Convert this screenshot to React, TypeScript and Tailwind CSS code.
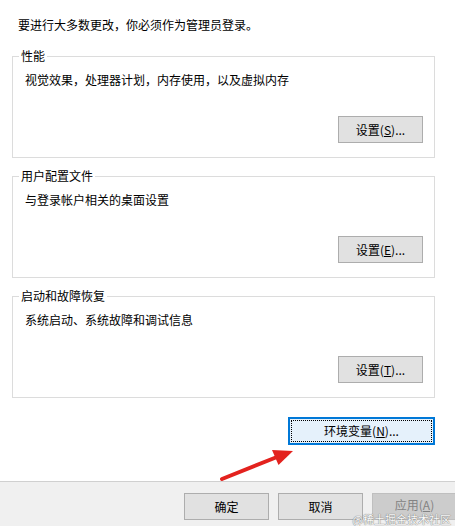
import React from "react";

const font = { fontFamily: '"Microsoft YaHei", "Noto Sans CJK SC", "Noto Sans", sans-serif' };

function WinButton({ children, className = "" }: { children: React.ReactNode; className?: string }) {
  return (
    <button className={`h-[27px] w-[85px] shrink-0 border border-[#adadad] bg-[#e1e1e1] text-[12px] leading-none text-black ${className}`}>
      {children}
    </button>
  );
}

function Group({ title, desc, label, hotkey }: { title: string; desc: string; label: string; hotkey: string }) {
  return (
    <fieldset className="border border-[#dcdcdc]">
      <legend className="ml-[6px] px-[2px] text-[12px] leading-[16px]">{title}</legend>
      <div className="pl-[12px] pt-[8px] text-[12px] leading-[16px]">{desc}</div>
      <div className="flex justify-end pr-[11px] pt-[28px] pb-[14px]">
        <WinButton>
          {label}(<u>{hotkey}</u>)...
        </WinButton>
      </div>
    </fieldset>
  );
}

export default function App() {
  return (
    <div className="relative flex h-[526px] w-[455px] flex-col overflow-hidden bg-white text-black" style={font}>
      <div className="pl-[12px] pr-[20px]">
        <p className="pl-[6px] pt-[17px] text-[12px] leading-[16px]">要进行大多数更改，你必须作为管理员登录。</p>
        <div className="mt-[15px] flex flex-col gap-[10px]">
          <Group title="性能" desc="视觉效果，处理器计划，内存使用，以及虚拟内存" label="设置" hotkey="S" />
          <Group title="用户配置文件" desc="与登录帐户相关的桌面设置" label="设置" hotkey="E" />
          <Group title="启动和故障恢复" desc="系统启动、系统故障和调试信息" label="设置" hotkey="T" />
        </div>
        <div className="mt-[19px] flex justify-end">
          <button className="h-[28px] w-[147px] border-2 border-[#0078d7] bg-[#e5f1fb] p-[1px] text-[12px] text-black">
            <span className="flex h-full w-full items-center justify-center border border-dotted border-black">
              环境变量(<u>N</u>)...
            </span>
          </button>
        </div>
      </div>

      <div className="mt-auto h-[45px] border-t border-[#d0d0d0] bg-[#f0f0f0] pt-[11px]">
        <div className="flex gap-[9px] pl-[184px]">
          <WinButton>确定</WinButton>
          <WinButton>取消</WinButton>
          <button className="h-[27px] w-[85px] shrink-0 border border-[#bfbfbf] bg-[#cccccc] pb-[4px] text-[12px] leading-none text-[#838383]">
            应用(<u>A</u>)
          </button>
        </div>
      </div>

      <svg className="pointer-events-none absolute left-[215px] top-[445px]" width="85" height="40" viewBox="0 0 85 40">
        <line x1="7" y1="34" x2="62" y2="12" stroke="#e3221e" strokeWidth="4" strokeLinecap="round" />
        <polygon points="78,6 63.5,20 57,5" fill="#e3221e" />
      </svg>

      <div className="pointer-events-none absolute bottom-[0px] right-[4px] text-[11px] leading-[13px] text-[#fafafa] [text-shadow:0_0_1px_#777,0_0_1px_#777]">
        @稀土掘金技术社区
      </div>
    </div>
  );
}
